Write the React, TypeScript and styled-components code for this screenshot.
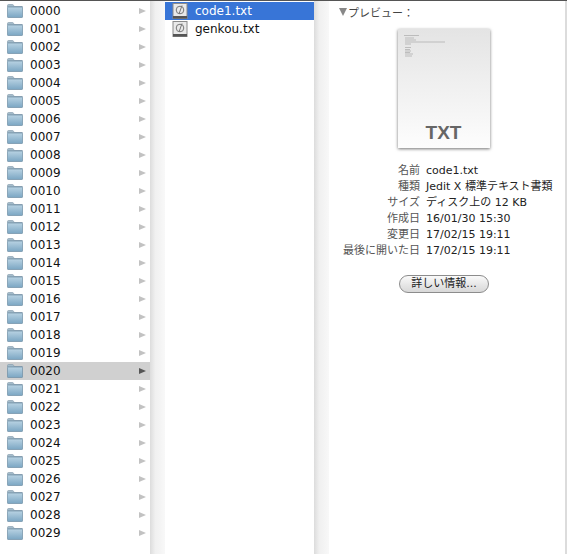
import React from 'react';
import styled, { createGlobalStyle } from 'styled-components';

const GlobalStyle = createGlobalStyle`
  html, body {
    margin: 0;
    padding: 0;
    background: #fff;
  }
  body {
    font-family: "DejaVu Sans", "Noto Sans CJK JP", sans-serif;
    color: #111;
  }
`;

const Browser = styled.div`
  width: 567px;
  height: 554px;
  box-sizing: border-box;
  border-top: 1px solid #555;
  display: flex;
  overflow: hidden;
  background: #fff;
`;

const ListColumn = styled.div<{ $width: number }>`
  width: ${p => p.$width}px;
  flex: none;
  display: flex;
  flex-direction: column;
  padding-top: 1px;
`;

const Gutter = styled.div`
  width: 15px;
  flex: none;
  background: linear-gradient(to right, #dcdcdc, #f0f0f0 35%, #f8f8f8);
`;

const Row = styled.div<{ $state?: 'selected' | 'path' }>`
  height: 18px;
  display: flex;
  align-items: center;
  font-size: 12px;
  padding-left: 7px;
  background: ${p => (p.$state === 'selected' ? '#3875d7' : p.$state === 'path' ? '#d0d0d0' : 'transparent')};
  color: ${p => (p.$state === 'selected' ? '#fff' : '#111')};
`;

const RowName = styled.span`
  flex: 1;
  margin-left: 7px;
  white-space: nowrap;
`;

const Arrow = styled.span<{ $dark?: boolean }>`
  width: 0;
  height: 0;
  margin-right: 4px;
  border-left: 7px solid ${p => (p.$dark ? '#555' : '#c2c2c2')};
  border-top: 3.5px solid transparent;
  border-bottom: 3.5px solid transparent;
`;

const FileRow = styled(Row)`
  padding-left: 7px;
`;

const PreviewPane = styled.div`
  flex: 1;
  display: flex;
  flex-direction: column;
  align-items: center;
  position: relative;
  padding-top: 3px;
  border-right: 2px solid #dcdcdc;
`;

const PreviewHeading = styled.div`
  align-self: flex-start;
  display: flex;
  align-items: center;
  height: 16px;
  margin-left: 10px;
  font-size: 11px;
  color: #444;
  font-family: "Noto Sans CJK JP", sans-serif;
`;

const Disclosure = styled.span`
  width: 0;
  height: 0;
  margin-right: 1px;
  border-top: 8px solid #888;
  border-left: 4.5px solid transparent;
  border-right: 4.5px solid transparent;
`;

const Thumbnail = styled.div`
  width: 92px;
  height: 119px;
  margin-top: 9px;
  margin-right: 7px;
  box-sizing: border-box;
  padding: 6px 6px 0;
  display: flex;
  flex-direction: column;
  background: linear-gradient(to bottom, #e4e4e4, #fdfdfd);
  box-shadow: 0 1px 3px rgba(0, 0, 0, 0.55);
`;

const ThumbLines = styled.svg`
  display: block;
`;

const ThumbLabel = styled.div`
  margin-top: auto;
  margin-bottom: 4px;
  text-align: center;
  font-family: "Liberation Sans", sans-serif;
  font-weight: bold;
  font-size: 19px;
  line-height: 22px;
  color: #666;
`;

const MetaTable = styled.div`
  align-self: flex-start;
  margin-top: 15px;
  display: grid;
  grid-template-columns: 91px auto;
  grid-auto-rows: 16px;
  column-gap: 6px;
  font-size: 11px;
  line-height: 16px;
  white-space: nowrap;
`;

const MetaLabel = styled.div`
  text-align: right;
  color: #555;
`;

const MetaValue = styled.div`
  color: #222;
`;

const MoreButton = styled.button`
  width: 90px;
  height: 18px;
  margin-top: 16px;
  margin-right: 6px;
  padding: 0;
  font: inherit;
  font-size: 11px;
  line-height: 16px;
  color: #222;
  border: 1px solid #8c8c8c;
  border-radius: 9px;
  background: linear-gradient(to bottom, #fafafa, #e6e6e6 55%, #d8d8d8);
`;

const FolderIcon = () => (
  <svg width="16" height="14" viewBox="0 0 16 14">
    <defs>
      <linearGradient id="folderBody" x1="0" y1="0" x2="0" y2="1">
        <stop offset="0" stopColor="#b9d3e3" />
        <stop offset="1" stopColor="#7ba6c3" />
      </linearGradient>
    </defs>
    <path d="M.5 3V1.5q0-1 1-1h4q.8 0 1.2 1l.4 1h8q.4 0 .4.5z" fill="#a4bccb" stroke="#7f97a8" strokeWidth=".6" />
    <rect x=".5" y="3" width="15" height="10.5" rx=".6" fill="url(#folderBody)" stroke="#6f8ea3" strokeWidth=".7" />
  </svg>
);

const DocIcon = () => (
  <svg width="16" height="16" viewBox="0 0 16 16">
    <rect x="1" y="0.5" width="14" height="15" fill="#e9e9e9" stroke="#8a8a8a" />
    <rect x="1" y="13" width="14" height="2.5" fill="#555" />
    <circle cx="8" cy="7" r="3.8" fill="none" stroke="#777" />
    <path d="M10 2.5 7 11" stroke="#777" fill="none" />
  </svg>
);

const folders = Array.from({ length: 30 }, (_, i) => String(i).padStart(4, '0'));

const meta = [
  ['名前', 'code1.txt'],
  ['種類', 'Jedit X 標準テキスト書類'],
  ['サイズ', 'ディスク上の 12 KB'],
  ['作成日', '16/01/30 15:30'],
  ['変更日', '17/02/15 19:11'],
  ['最後に開いた日', '17/02/15 19:11'],
];

export default function App() {
  return (
    <>
      <GlobalStyle />
      <Browser>
        <ListColumn $width={150}>
          {folders.map(name => (
            <Row key={name} $state={name === '0020' ? 'path' : undefined}>
              <FolderIcon />
              <RowName>{name}</RowName>
              <Arrow $dark={name === '0020'} />
            </Row>
          ))}
        </ListColumn>
        <Gutter />
        <ListColumn $width={149}>
          <FileRow $state="selected">
            <DocIcon />
            <RowName>code1.txt</RowName>
          </FileRow>
          <FileRow>
            <DocIcon />
            <RowName>genkou.txt</RowName>
          </FileRow>
        </ListColumn>
        <Gutter />
        <PreviewPane>
          <PreviewHeading>
            <Disclosure />
            プレビュー：
          </PreviewHeading>
          <Thumbnail>
            <ThumbLines width="42" height="22" viewBox="0 0 42 22">
              <path
                d="M0 .5h15M1 3h9M1 5h11M1 7h40M1 9h6M1 12.5h6M1 14.5h5M1 16h6M1 17.5h5M1 19h8M1 21h7"
                stroke="#aaa"
                strokeWidth=".7"
              />
            </ThumbLines>
            <ThumbLabel>TXT</ThumbLabel>
          </Thumbnail>
          <MetaTable>
            {meta.map(([label, value]) => (
              <React.Fragment key={label}>
                <MetaLabel>{label}</MetaLabel>
                <MetaValue>{value}</MetaValue>
              </React.Fragment>
            ))}
          </MetaTable>
          <MoreButton>詳しい情報...</MoreButton>
        </PreviewPane>
      </Browser>
    </>
  );
}
